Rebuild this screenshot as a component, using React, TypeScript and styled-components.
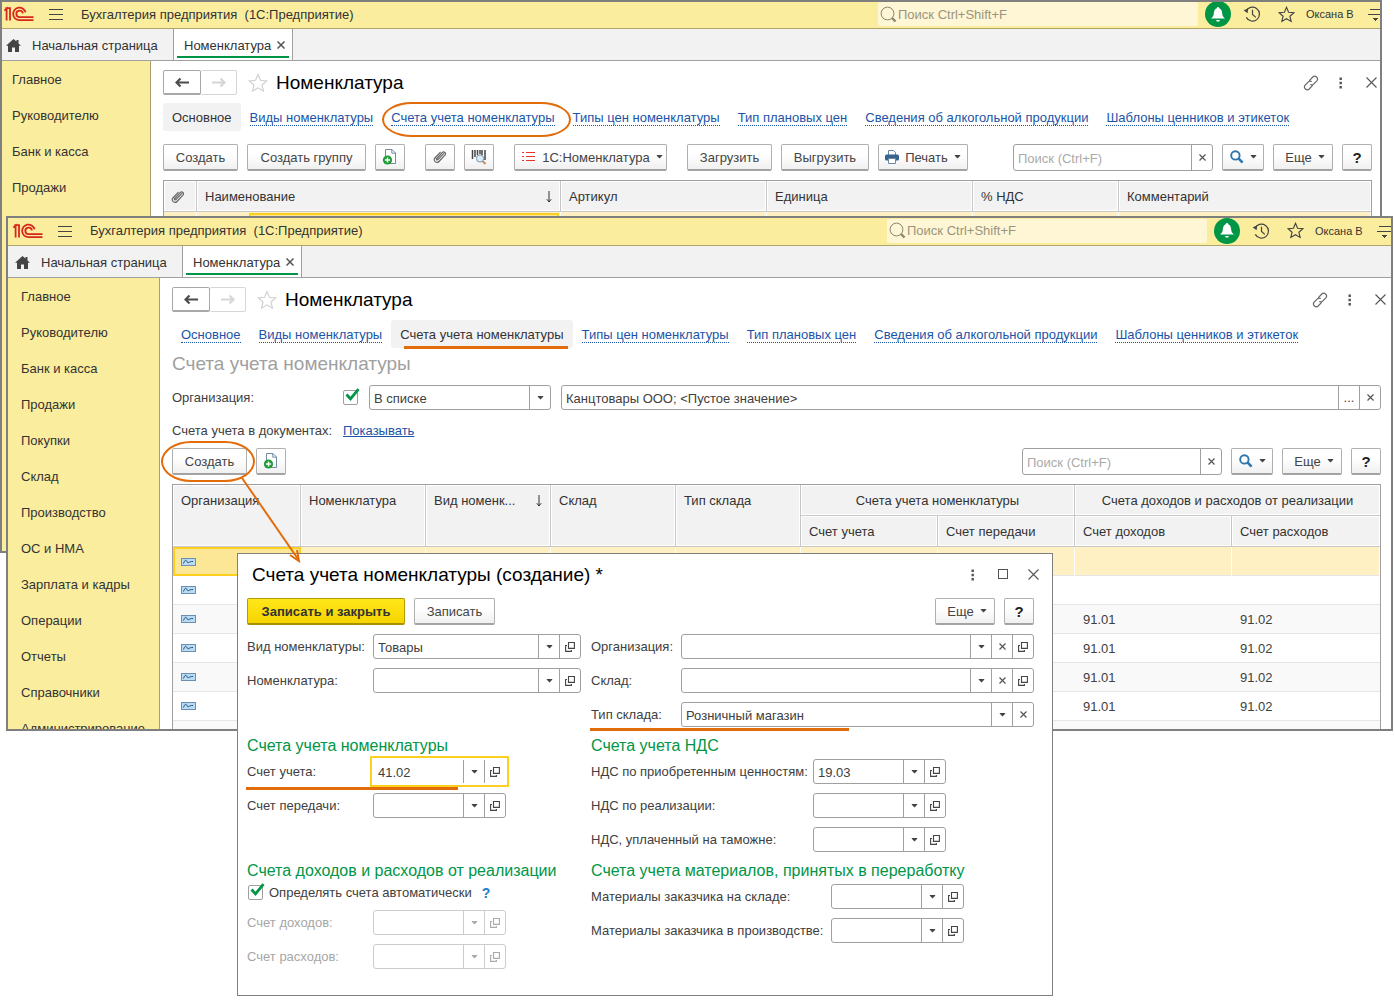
import React from "react";
import styled, { createGlobalStyle, css } from "styled-components";

const Global = createGlobalStyle`
  *, *::before, *::after { box-sizing: border-box; }
  body { margin: 0; background: #fff; }
  body, button, input, select {
    font-family: "Liberation Sans", Arial, sans-serif;
    font-size: 13px;
    color: #404040;
  }
  button, input, select { margin: 0; padding: 0; }
  h1, h2, h3, ul { margin: 0; padding: 0; font-weight: normal; list-style: none; }
`;

const c = {
  frame: "#7f7f7f",
  yellow: "#fbed9e",
  line: "#a0a0a0",
  grey: "#f2f2f2",
  link: "#1a54a8",
  green: "#009646",
  orange: "#e36c0a",
  accent: "#fccf21",
};

/* ---------- desktop and windows ---------- */

const Desktop = styled.main`
  position: relative;
  min-height: 1000px;
  min-width: 1240px;
`;

const Win = styled.section<{ $top: number; $left: number; $right: number; $height: number }>`
  position: absolute;
  top: ${(p) => p.$top}px;
  left: ${(p) => p.$left}px;
  right: ${(p) => p.$right}px;
  height: ${(p) => p.$height}px;
  display: flex;
  flex-direction: column;
  overflow: hidden;
  background: #fff;
  border: 2px solid ${c.frame};
`;

const Header = styled.header<{ $inset: number; $tall?: boolean }>`
  flex: none;
  display: flex;
  align-items: center;
  height: ${(p) => (p.$tall ? 28 : 27)}px;
  padding: 0 0 2px ${(p) => p.$inset + 2}px;
  background: ${c.yellow};
  border-bottom: 1px solid #b0a46a;
`;

const PlainButton = styled.button`
  flex: none;
  display: grid;
  place-items: center;
  border: 0;
  background: none;
  color: inherit;
`;

const MenuButton = styled(PlainButton)`
  width: 16px;
  height: 16px;
  margin: 0 17px 0 14px;
`;

const AppName = styled.div`
  flex: 1;
  white-space: pre;
  color: #333;
`;

const GlobalSearch = styled.label`
  display: flex;
  align-items: center;
  gap: 1px;
  width: 320px;
  height: 24px;
  padding-left: 2px;
  border-radius: 2px;
  background: #fff6d6;
  color: #8a8670;
  input {
    flex: 1;
    min-width: 0;
    border: 0;
    outline: 0;
    background: none;
  }
  input::placeholder { color: #9a957c; opacity: 1; }
`;

const HeaderTools = styled.div<{ $end: number }>`
  display: flex;
  align-items: center;
  height: 26px;
  padding-left: 7px;
  color: #444;
  margin-right: ${(p) => p.$end}px;
`;

const Bell = styled(PlainButton)`
  width: 26px;
  height: 26px;
  border-radius: 50%;
  background: ${c.green};
  margin-right: 12px;
`;

const HeaderIcon = styled(PlainButton)`
  width: 18px;
  height: 18px;
  margin-right: 16px;
`;

const User = styled.span`
  width: 49px;
  margin: 0 13px 0 -5px;
  font-size: 11px;
  color: #333;
  white-space: nowrap;
`;

const TabBar = styled.nav<{ $inset: number }>`
  flex: none;
  display: flex;
  height: 32px;
  padding-left: ${(p) => p.$inset}px;
  background: ${c.grey};
  border-bottom: 1px solid ${c.line};
  color: #333;
`;

const HomeTab = styled.button`
  display: flex;
  align-items: center;
  gap: 11px;
  width: 171px;
  padding: 1px 0 0 4px;
  border: 0;
  background: none;
  color: #333;
`;

const ActiveTab = styled.div`
  display: flex;
  align-items: center;
  justify-content: space-between;
  width: 120px;
  padding: 1px 4px 0 10px;
  background:
    linear-gradient(${c.green}, ${c.green}) 3px 27px / calc(100% - 6px) 2px no-repeat,
    #fff;
  border: 1px solid ${c.line};
  border-width: 0 1px;
`;

const CloseTab = styled(PlainButton)`
  width: 14px;
  height: 14px;
`;

const Body = styled.div`
  flex: 1;
  min-height: 0;
  display: flex;
`;

const Sidebar = styled.ul<{ $inset: number }>`
  flex: none;
  width: ${(p) => p.$inset + 149}px;
  overflow: hidden;
  padding: 1px 0 0 ${(p) => p.$inset + 10}px;
  background: ${c.yellow};
  border-right: 1px solid #a89f6c;
  a {
    display: block;
    line-height: 36px;
    color: #333;
    text-decoration: none;
    white-space: nowrap;
  }
`;

const Content = styled.div<{ $end: number }>`
  flex: 1;
  min-width: 0;
  padding: 9px ${(p) => p.$end}px 0 12px;
`;

/* ---------- page heading ---------- */

const PageHead = styled.div`
  display: flex;
  align-items: center;
  height: 25px;
  margin-bottom: 8px;
`;

const NavPair = styled.div`
  display: flex;
  width: 74px;
  height: 25px;
  margin-right: 11px;
`;

const NavButton = styled(PlainButton)<{ $off?: boolean }>`
  width: 38px;
  height: 25px;
  background: #fff;
  border: 1px solid ${(p) => (p.$off ? "#d6d6d6" : "#a8a8a8")};
  border-bottom-width: ${(p) => (p.$off ? 1 : 2)}px;
  border-radius: 2px;
  color: ${(p) => (p.$off ? "#d6d6d6" : "#4d4d4d")};
  & + & { width: 36px; border-left: 0; }
`;

const Title = styled.h1`
  flex: 1;
  margin-left: 8px;
  font-size: 19px;
  line-height: 24px;
  color: #000;
`;

const HeadIcons = styled.div`
  display: flex;
  align-items: center;
  gap: 14px;
  color: #666;
  margin-right: -7px;
`;

const HeadIcon = styled(PlainButton)`
  width: 16px;
  height: 16px;
`;

const Links = styled.nav`
  display: flex;
  height: 28px;
  white-space: nowrap;
`;

const SectionLink = styled.a<{ $current?: boolean }>`
  display: flex;
  align-items: center;
  padding: 2px 9px 0;
  border-radius: 3px;
  text-decoration: none;
  color: ${(p) => (p.$current ? "#333" : c.link)};
  background: ${(p) => (p.$current ? c.grey : "none")};
  span {
    line-height: 15px;
    border-bottom: 1px dotted ${(p) => (p.$current ? "transparent" : c.link)};
  }
`;

/* ---------- buttons and fields ---------- */

const Toolbar = styled.div<{ $gap?: number }>`
  display: flex;
  align-items: flex-start;
  gap: 9px;
  height: 27px;
  margin: ${(p) => p.$gap ?? 9}px 0 9px;
`;

const Space = styled.span<{ $w?: number }>`
  ${(p) => (p.$w ? css`width: ${p.$w}px;` : css`flex: 1;`)}
`;

const Button = styled.button<{ $w: number; $main?: boolean }>`
  flex: none;
  display: flex;
  align-items: center;
  justify-content: center;
  gap: 6px;
  width: ${(p) => p.$w}px;
  height: 27px;
  border: 1px solid ${(p) => (p.$main ? "#b59a00" : "#b0b0b0")};
  border-bottom: 2px solid ${(p) => (p.$main ? "#a89000" : "#a3a3a3")};
  border-radius: 2px;
  background: ${(p) => (p.$main ? "linear-gradient(#ffe71a, #f6d400)" : "linear-gradient(#fff 40%, #f0f0f0)")};
  font-weight: ${(p) => (p.$main ? "bold" : "normal")};
  color: ${(p) => (p.$main ? "#333" : "#444")};
  white-space: nowrap;
`;

const MenuDropButton = styled(Button)`
  padding-left: 4px;
`;

const HelpButton = styled(Button)`
  font-size: 15px;
  font-weight: bold;
  color: #222;
`;

const FieldBox = styled.div<{ $w?: number; $h?: number; $focus?: boolean; $off?: boolean }>`
  display: flex;
  ${(p) => (p.$w ? css`flex: none; width: ${p.$w}px;` : css`flex: 1; min-width: 0;`)}
  height: ${(p) => p.$h ?? 25}px;
  border: 1px solid ${(p) => (p.$off ? "#ccc" : c.line)};
  border-radius: 3px;
  background: #fff;
  color: ${(p) => (p.$off ? "#aaa" : "#444")};
  ${(p) =>
    p.$focus &&
    css`
      border-color: transparent;
      border-radius: 0;
      outline: 2px solid ${c.accent};
      outline-offset: 1px;
    `}
  input, select {
    flex: 1;
    min-width: 0;
    padding: 1px 4px 0;
    border: 0;
    outline: 0;
    background: none;
    appearance: none;
  }
  input::placeholder { color: #aaa; opacity: 1; }
`;

const FieldButton = styled(PlainButton)<{ $off?: boolean }>`
  width: 21px;
  border-left: 1px solid ${(p) => (p.$off ? "#ccc" : c.line)};
`;

const Tick = styled.span`
  position: relative;
  flex: none;
  width: 16px;
  height: 16px;
  input {
    display: block;
    width: 15px;
    height: 15px;
    appearance: none;
    border: 1px solid ${c.line};
    border-radius: 2px;
    background: #fff;
  }
  svg {
    position: absolute;
    left: 2px;
    top: -2px;
    pointer-events: none;
  }
`;

/* ---------- tables ---------- */

const Grid = styled.table`
  width: 100%;
  table-layout: fixed;
  border-collapse: separate;
  border-spacing: 0;
  border: 1px solid ${c.line};
  th {
    height: 31px;
    padding: 1px 8px 0;
    font-weight: normal;
    text-align: left;
    vertical-align: top;
    line-height: 29px;
    background: ${c.grey};
    box-shadow: inset 0 0 0 1px #fff;
    border: 1px solid #c8c8c8;
    border-width: 0 1px 1px 0;
    white-space: nowrap;
    color: #333;
  }
  thead tr:first-child th:last-child, thead tr + tr th:last-child { border-right: 0; }
  th svg, td svg { display: block; }
  td { height: 29px; padding: 0 8px; line-height: 15px; border-bottom: 1px solid #e6e6e6; }
  tbody tr:nth-child(odd) td { background: #f9f9f9; }
  tbody tr:first-child td { background: #fef0c3; border-right: 1px solid #fff; }
`;

const Centered = styled.span`
  display: block;
  text-align: center;
`;

const Sorted = styled.span`
  display: flex;
  align-items: center;
  justify-content: space-between;
`;

const ClipHead = styled.span`
  display: grid;
  place-items: center;
  height: 29px;
  margin: 0 -4px 0 -8px;
`;

const CurrentCell = styled.td`
  && {
    padding: 0 6px;
    background: #fce796 !important;
    border: 2px solid ${c.accent} !important;
  }
`;

const GroupCell = styled.td`
  && { padding: 1px 1px 0 52px; }
  div { height: 28px; border: 2px solid ${c.accent}; background: #fce796; }
`;

/* ---------- filter block ---------- */

const PageSubtitle = styled.h2`
  margin: 4px 0 9px;
  font-size: 19px;
  line-height: 24px;
  color: #a0a0a0;
`;

const FilterRow = styled.div<{ $low?: boolean }>`
  display: flex;
  align-items: center;
  gap: 10px;
  height: ${(p) => (p.$low ? 18 : 25)}px;
  margin-bottom: ${(p) => (p.$low ? 9 : 11)}px;
  > :first-child { width: 161px; white-space: nowrap; }
  a { color: ${c.link}; }
`;

/* ---------- dialog ---------- */

const Dialog = styled.section`
  position: absolute;
  left: 237px;
  top: 553px;
  width: 816px;
  height: 443px;
  padding: 0 18px 0 9px;
  background: #fff;
  border: 1px solid ${c.frame};
`;

const DialogHead = styled.div`
  display: flex;
  align-items: center;
  height: 41px;
  margin-bottom: 3px;
  padding-left: 5px;
  h1 { margin-left: 0; }
`;

const Columns = styled.div`
  display: grid;
  grid-template-columns: 334px 1fr;
  column-gap: 10px;
`;

const Fields = styled.div`
  display: flex;
  flex-direction: column;
  gap: 9px;
`;

const FormRow = styled.div<{ $label: number; $off?: boolean }>`
  display: flex;
  align-items: center;
  height: 25px;
  > label {
    flex: none;
    width: ${(p) => p.$label}px;
    white-space: nowrap;
    color: ${(p) => (p.$off ? "#a6a6a6" : "#404040")};
  }
`;

const GroupTitle = styled.h3`
  margin: 9px 0 3px;
  font-size: 16px;
  line-height: 20px;
  color: ${c.green};
  white-space: nowrap;
`;

const TickRow = styled.div`
  display: flex;
  align-items: center;
  gap: 5px;
  height: 17px;
  padding-left: 1px;
  b { margin-left: 5px; font-size: 14px; color: #1d7fc0; }
`;

/* ---------- tutorial marks over the windows ---------- */

const Oval = styled.div<{ $x: number; $y: number; $w: number; $h: number }>`
  position: absolute;
  left: ${(p) => p.$x}px;
  top: ${(p) => p.$y}px;
  width: ${(p) => p.$w}px;
  height: ${(p) => p.$h}px;
  border: 2px solid ${c.orange};
  border-radius: 30px / 50%;
  pointer-events: none;
`;

const Underline = styled.div<{ $x: number; $y: number; $w: number }>`
  position: absolute;
  left: ${(p) => p.$x}px;
  top: ${(p) => p.$y}px;
  width: ${(p) => p.$w}px;
  height: 3px;
  background: ${c.orange};
  pointer-events: none;
`;

const Arrow = styled.svg`
  position: absolute;
  left: 236px;
  top: 474px;
  pointer-events: none;
`;

/* ---------- drawings ---------- */

const Logo = () => (
  <svg width="30" height="16" viewBox="0 0 30 16" fill="none" stroke="#d9261c" strokeWidth="1.8">
    <path d="M0.4 4.6 L2.6 2.6 V14.6 M1.4 2.2 H6 V14.6" />
    <path d="M21.6 6.4 A6.3 6.3 0 1 0 15.6 14.2 H29.5" />
    <path d="M18.9 7.4 A3.3 3.3 0 1 0 15.6 11.2 H29.5" />
  </svg>
);
const Burger = () => (
  <svg width="16" height="14" viewBox="0 0 16 14" stroke="#444" shapeRendering="crispEdges">
    <path d="M1 2.5H15M1 7.5H15M1 12.5H15" />
  </svg>
);
const Magnifier = () => (
  <svg width="17" height="17" viewBox="0 0 17 17" fill="none" stroke="#8a8670">
    <circle cx="7.5" cy="7.5" r="6.4" />
    <path d="M12 12 L15.5 15.5" strokeWidth="2.4" />
  </svg>
);
const BellIcon = () => (
  <svg width="16" height="17" viewBox="0 0 16 17" fill="#fff">
    <path d="M8 1 C8.8 1 9.2 1.6 9.2 2.3 C11.4 3 12 5 12.2 7.5 C12.4 10 13.4 11.2 15 12.6 H1 C2.6 11.2 3.6 10 3.8 7.5 C4 5 4.6 3 6.8 2.3 C6.8 1.6 7.2 1 8 1Z M6 14 H10 Q9.6 15.8 8 15.8 Q6.4 15.8 6 14Z" />
  </svg>
);
const History = () => (
  <svg width="18" height="18" viewBox="0 0 18 18" fill="none" stroke="#444" strokeWidth="1.2">
    <path d="M3 6.4 A7 7 0 1 1 3.3 12.4" />
    <path d="M9.5 4.8 V9.4 L12.8 12.4" />
    <path d="M0.6 5.2 L5.2 3.6 L4.6 8.2Z" fill="#444" stroke="none" />
  </svg>
);
const Star = ({ size = 17, color = "#444", w = 1.2 }: { size?: number; color?: string; w?: number }) => (
  <svg width={size} height={size} viewBox="0 0 18 18" fill="none" stroke={color} strokeWidth={w}>
    <path d="M9 1.4 L11.2 6.6 L16.8 7.1 L12.6 10.8 L13.9 16.3 L9 13.4 L4.1 16.3 L5.4 10.8 L1.2 7.1 L6.8 6.6Z" />
  </svg>
);
const ViewMenu = () => (
  <svg width="14" height="16" viewBox="0 0 14 16" stroke="#444" shapeRendering="crispEdges">
    <path d="M2 3.5H14M0 8.5H14" />
    <path d="M4.5 12H10.5L7.5 15Z" fill="#444" stroke="none" />
  </svg>
);
const Home = () => (
  <svg width="15" height="13" viewBox="0 0 15 13" fill="#444">
    <path d="M7.5 0 L10.5 2.6 V1 H12.5 V4.4 L15 6.8 H13 V13 H9 V8.5 H6 V13 H2 V6.8 H0Z" />
  </svg>
);
const Cross = ({ s = 8, w = 1.2, color = "#555" }: { s?: number; w?: number; color?: string }) => (
  <svg width={s} height={s} viewBox={`0 0 ${s} ${s}`} stroke={color} strokeWidth={w}>
    <path d={`M0.5 0.5L${s - 0.5} ${s - 0.5}M${s - 0.5} 0.5L0.5 ${s - 0.5}`} />
  </svg>
);
const ArrowIcon = ({ right = false }: { right?: boolean }) => (
  <svg width="14" height="11" viewBox="0 0 14 11" fill="none" stroke="currentColor" strokeWidth="2.2">
    <path d={right ? "M0 5.5H12M8.5 1.5L12.5 5.5L8.5 9.5" : "M14 5.5H2M5.5 1.5L1.5 5.5L5.5 9.5"} />
  </svg>
);
const LinkIcon = () => (
  <svg width="16" height="16" viewBox="0 0 16 16" fill="none" stroke="#666" strokeWidth="1.2" strokeLinecap="round">
    <path d="M6.6 5.4 L9.8 2 C12.2 -0.4 16 3.2 13.9 5.8 L10.6 9.2 C9.8 10 8.6 10 7.8 9.6" />
    <path d="M9.4 10.6 L6.2 14 C3.8 16.4 0 12.8 2.1 10.2 L5.4 6.8 C6.2 6 7.4 6 8.2 6.4" />
  </svg>
);
const Dots = () => (
  <svg width="4" height="12" viewBox="0 0 4 12" fill="#555">
    <path d="M0.5 0.5h2.4v2.4h-2.4zM0.5 4.8h2.4v2.4h-2.4zM0.5 9h2.4v2.4h-2.4z" />
  </svg>
);
const Caret = () => (
  <svg width="7" height="4" viewBox="0 0 7 4" fill="currentColor">
    <path d="M0.8 0H6.2V0.8L3.5 3.4L0.8 0.8Z" />
  </svg>
);
const OpenIcon = () => (
  <svg width="10" height="10" viewBox="0 0 10 10" fill="none" stroke="currentColor" strokeWidth="1.1">
    <path d="M3.5 0.5H9.4V6.4H3.5ZM2 3.5H0.6V9.4H6.4V8" />
  </svg>
);
const Clip = () => (
  <svg width="14" height="14" viewBox="0 0 14 14" fill="none" stroke="#666" strokeWidth="1.2" strokeLinecap="round">
    <path d="M10.6 3.6 L4.9 9.6 C4 10.5 3 9.4 3.8 8.5 L9.2 2.6 C10.9 0.8 13.6 3.2 11.9 5.2 L6 11.5 C3.6 14 -0.4 10.6 1.9 8 L7.2 2.3" />
  </svg>
);
const NewDoc = () => (
  <svg width="16" height="18" viewBox="0 0 16 18" fill="none">
    <path d="M3.5 1.5H10L13.5 5V15.5H3.5Z" fill="#fff" stroke="#7389a3" />
    <path d="M9.8 1.5V5.2H13.5" stroke="#7389a3" />
    <circle cx="5.5" cy="12" r="4.6" fill="#1f9c35" />
    <path d="M5.5 9.4V14.6M2.9 12H8.1" stroke="#fff" strokeWidth="1.4" />
  </svg>
);
const Barcode = () => (
  <svg width="18" height="18" viewBox="0 0 18 18" fill="none">
    <path d="M2.5 2V11M5 2V9M7.5 2V7M10 2V6M12 2V7M15 2V12" stroke="#444" strokeWidth="1.5" />
    <circle cx="10" cy="10.5" r="3.6" fill="#d8ecfa" stroke="#7d93a8" />
    <path d="M12.8 13.2L15.5 16" stroke="#c98a5a" strokeWidth="2" />
  </svg>
);
const RedList = () => (
  <svg width="14" height="12" viewBox="0 0 14 12" stroke="#e8352c" shapeRendering="crispEdges">
    <path d="M0 1.5H2M4 1.5H13M0 5.5H2M4 5.5H13M0 9.5H2M4 9.5H13" />
  </svg>
);
const Printer = () => (
  <svg width="14" height="14" viewBox="0 0 14 14">
    <path d="M3.5 5V0.5H8.5L10.5 2.5V5" fill="#fff" stroke="#6a87a3" />
    <rect x="0" y="4.5" width="14" height="6" rx="1.5" fill="#35648f" />
    <path d="M3.5 8.5H10.5V13.5H3.5Z" fill="#fff" stroke="#6a87a3" />
  </svg>
);
const BlueFind = () => (
  <svg width="14" height="14" viewBox="0 0 14 14" fill="none" stroke="#2b76ae">
    <circle cx="5.4" cy="5.4" r="4.2" strokeWidth="1.9" />
    <path d="M8.4 8.4L12.6 12.6" strokeWidth="2.6" />
  </svg>
);
const SortArrow = () => (
  <svg width="6" height="12" viewBox="0 0 6 12" fill="none" stroke="#333">
    <path d="M3 0V11M0.8 8.2L3 11L5.2 8.2" />
  </svg>
);
const RecordIcon = () => (
  <svg width="15" height="8" viewBox="0 0 15 8">
    <rect x="0.5" y="0.5" width="14" height="7" fill="#b9dbf3" stroke="#6b8fb3" />
    <path d="M2.5 5.5C4 1.5 5 1.5 6.2 4C7.2 6 8.2 3.2 12 3.5" fill="none" stroke="#234f7d" />
  </svg>
);
const Check = () => (
  <svg width="15" height="15" viewBox="0 0 15 15" fill="none" stroke={c.green} strokeWidth="2.8">
    <path d="M1.5 6.5L5.5 10.8L13.5 1.2" />
  </svg>
);
const Square = () => (
  <svg width="11" height="11" viewBox="0 0 11 11" fill="none" stroke="#555" shapeRendering="crispEdges">
    <rect x="0.5" y="0.5" width="9" height="9" />
  </svg>
);

/* ---------- shared parts ---------- */

const sections = [
  "Главное", "Руководителю", "Банк и касса", "Продажи", "Покупки", "Склад", "Производство",
  "ОС и НМА", "Зарплата и кадры", "Операции", "Отчеты", "Справочники", "Администрирование",
];

const pages = [
  "Основное", "Виды номенклатуры", "Счета учета номенклатуры", "Типы цен номенклатуры",
  "Тип плановых цен", "Сведения об алкогольной продукции", "Шаблоны ценников и этикеток",
];

type FrameProps = {
  top: number; left: number; right: number; height: number;
  inset: number; end: number; current: number; count: number; tall?: boolean;
  children: React.ReactNode;
};

function AppWindow({ top, left, right, height, inset, end, current, count, tall, children }: FrameProps) {
  return (
    <Win $top={top} $left={left} $right={right} $height={height}>
      <Header $inset={inset} $tall={tall}>
        <Logo />
        <MenuButton aria-label="Меню"><Burger /></MenuButton>
        <AppName>Бухгалтерия предприятия  (1С:Предприятие)</AppName>
        <GlobalSearch>
          <Magnifier />
          <input aria-label="Поиск по программе" placeholder="Поиск Ctrl+Shift+F" />
        </GlobalSearch>
        <HeaderTools $end={end - 10}>
          <Bell aria-label="Уведомления"><BellIcon /></Bell>
          <HeaderIcon aria-label="История"><History /></HeaderIcon>
          <HeaderIcon aria-label="Избранное"><Star /></HeaderIcon>
          <User>Оксана В</User>
          <PlainButton aria-label="Вид"><ViewMenu /></PlainButton>
        </HeaderTools>
      </Header>
      <TabBar $inset={inset}>
        <HomeTab><Home />Начальная страница</HomeTab>
        <ActiveTab>
          Номенклатура
          <CloseTab aria-label="Закрыть вкладку"><Cross s={8} w={1.5} /></CloseTab>
        </ActiveTab>
      </TabBar>
      <Body>
        <Sidebar $inset={inset}>
          {sections.slice(0, count).map((s) => <li key={s}><a href="#">{s}</a></li>)}
        </Sidebar>
        <Content $end={end}>
          <PageHead>
            <NavPair>
              <NavButton aria-label="Назад"><ArrowIcon /></NavButton>
              <NavButton aria-label="Вперед" $off><ArrowIcon right /></NavButton>
            </NavPair>
            <Star size={20} color="#cfcfcf" w={1} />
            <Title>Номенклатура</Title>
            <HeadIcons>
              <HeadIcon aria-label="Ссылка"><LinkIcon /></HeadIcon>
              <HeadIcon aria-label="Еще действия"><Dots /></HeadIcon>
              <HeadIcon aria-label="Закрыть"><Cross s={11} w={1.1} /></HeadIcon>
            </HeadIcons>
          </PageHead>
          <Links>
            {pages.map((p, i) => (
              <SectionLink key={p} href="#" $current={i === current}><span>{p}</span></SectionLink>
            ))}
          </Links>
          {children}
        </Content>
      </Body>
    </Win>
  );
}

const ListSearch = () => (
  <>
    <FieldBox $w={200} $h={27}>
      <input aria-label="Поиск в списке" placeholder="Поиск (Ctrl+F)" />
      <FieldButton aria-label="Очистить"><Cross s={7} /></FieldButton>
    </FieldBox>
    <Button $w={42} aria-label="Найти"><BlueFind /><Caret /></Button>
    <MenuDropButton $w={60}>Еще <Caret /></MenuDropButton>
    <HelpButton $w={30}>?</HelpButton>
  </>
);

type Btn = "pick" | "clear" | "open";

function Field({ id, label, value = "", buttons = ["pick", "open"], labelWidth, w, focus, off }: {
  id: string; label: string; value?: string; buttons?: Btn[]; labelWidth: number; w?: number; focus?: boolean; off?: boolean;
}) {
  return (
    <FormRow $label={labelWidth} $off={off}>
      <label htmlFor={id}>{label}</label>
      <FieldBox $w={w} $focus={focus} $off={off}>
        <input id={id} defaultValue={value} disabled={off} />
        {buttons.map((b) => (
          <FieldButton key={b} $off={off} disabled={off} aria-label={b === "pick" ? "Выбрать" : b === "clear" ? "Очистить" : "Открыть"}>
            {b === "pick" ? <Caret /> : b === "clear" ? <Cross s={7} /> : <OpenIcon />}
          </FieldButton>
        ))}
      </FieldBox>
    </FormRow>
  );
}

const rows = [
  ["", ""], ["", ""], ["91.01", "91.02"], ["91.01", "91.02"], ["91.01", "91.02"], ["91.01", "91.02"], ["", ""],
];

export default function App() {
  return (
    <Desktop>
      <Global />

      <AppWindow top={0} left={0} right={13} height={553} inset={0} end={8} current={0} count={4}>
        <Toolbar $gap={13}>
          <Button $w={75}>Создать</Button>
          <Button $w={119}>Создать группу</Button>
          <Button $w={30} aria-label="Создать копированием"><NewDoc /></Button>
          <Space $w={2} />
          <Button $w={30} aria-label="Файлы"><Clip /></Button>
          <Button $w={30} aria-label="Поиск по штрихкоду"><Barcode /></Button>
          <Space $w={2} />
          <MenuDropButton $w={153}><RedList />1С:Номенклатура <Caret /></MenuDropButton>
          <Space $w={2} />
          <Button $w={85}>Загрузить</Button>
          <Button $w={88}>Выгрузить</Button>
          <Button $w={90}><Printer />Печать <Caret /></Button>
          <Space />
          <ListSearch />
        </Toolbar>
        <Grid>
          <colgroup>
            <col width="33" /><col /><col width="206" /><col width="206" /><col width="146" /><col width="252" />
          </colgroup>
          <thead>
            <tr>
              <th><ClipHead><Clip /></ClipHead></th>
              <th><Sorted>Наименование <SortArrow /></Sorted></th>
              <th>Артикул</th>
              <th>Единица</th>
              <th>% НДС</th>
              <th>Комментарий</th>
            </tr>
          </thead>
          <tbody>
            <tr>
              <td /><GroupCell><div /></GroupCell><td /><td /><td /><td />
            </tr>
          </tbody>
        </Grid>
      </AppWindow>

      <AppWindow top={216} left={6} right={2} height={515} inset={3} end={10} current={2} count={13} tall>
        <PageSubtitle>Счета учета номенклатуры</PageSubtitle>
        <FilterRow>
          <label htmlFor="useOrg">Организация:</label>
          <Tick><input id="useOrg" type="checkbox" defaultChecked /><Check /></Tick>
          <FieldBox $w={182}>
            <select aria-label="Вид сравнения"><option>В списке</option></select>
            <FieldButton aria-label="Выбрать вид сравнения"><Caret /></FieldButton>
          </FieldBox>
          <FieldBox>
            <input aria-label="Организации" defaultValue="Канцтовары ООО; <Пустое значение>" />
            <FieldButton aria-label="Подобрать">...</FieldButton>
            <FieldButton aria-label="Очистить"><Cross s={7} /></FieldButton>
          </FieldBox>
        </FilterRow>
        <FilterRow $low>
          <span>Счета учета в документах:</span>
          <a href="#">Показывать</a>
        </FilterRow>
        <Toolbar>
          <Button $w={75}>Создать</Button>
          <Button $w={30} aria-label="Создать копированием"><NewDoc /></Button>
          <Space />
          <ListSearch />
        </Toolbar>
        <Grid>
          <colgroup>
            <col width="128" /><col width="125" /><col width="125" /><col width="125" /><col width="125" />
            <col width="137" /><col width="137" /><col width="157" /><col />
          </colgroup>
          <thead>
            <tr>
              <th rowSpan={2}>Организация</th>
              <th rowSpan={2}>Номенклатура</th>
              <th rowSpan={2}><Sorted>Вид номенк... <SortArrow /></Sorted></th>
              <th rowSpan={2}>Склад</th>
              <th rowSpan={2}>Тип склада</th>
              <th colSpan={2}><Centered>Счета учета номенклатуры</Centered></th>
              <th colSpan={2}><Centered>Счета доходов и расходов от реализации</Centered></th>
            </tr>
            <tr>
              <th>Счет учета</th>
              <th>Счет передачи</th>
              <th>Счет доходов</th>
              <th>Счет расходов</th>
            </tr>
          </thead>
          <tbody>
            {rows.map(([income, cost], i) => (
              <tr key={i}>
                {i === 0 ? <CurrentCell><RecordIcon /></CurrentCell> : <td><RecordIcon /></td>}
                <td /><td /><td /><td /><td /><td />
                <td>{income}</td>
                <td>{cost}</td>
              </tr>
            ))}
          </tbody>
        </Grid>
      </AppWindow>

      <Dialog role="dialog" aria-labelledby="dialogTitle">
        <DialogHead>
          <Title id="dialogTitle">Счета учета номенклатуры (создание) *</Title>
          <HeadIcons>
            <HeadIcon aria-label="Еще действия"><Dots /></HeadIcon>
            <HeadIcon aria-label="Развернуть"><Square /></HeadIcon>
            <HeadIcon aria-label="Закрыть"><Cross s={11} w={1.1} /></HeadIcon>
          </HeadIcons>
        </DialogHead>
        <Toolbar $gap={0}>
          <Button $w={158} $main>Записать и закрыть</Button>
          <Button $w={81}>Записать</Button>
          <Space />
          <MenuDropButton $w={60}>Еще <Caret /></MenuDropButton>
          <HelpButton $w={30}>?</HelpButton>
        </Toolbar>
        <Columns>
          <Fields>
            <Field id="kind" label="Вид номенклатуры:" value="Товары" labelWidth={126} w={208} />
            <Field id="item" label="Номенклатура:" labelWidth={126} w={208} />
          </Fields>
          <Fields>
            <Field id="org" label="Организация:" labelWidth={90} buttons={["pick", "clear", "open"]} />
            <Field id="store" label="Склад:" labelWidth={90} buttons={["pick", "clear", "open"]} />
            <Field id="storeType" label="Тип склада:" value="Розничный магазин" labelWidth={90} buttons={["pick", "clear"]} />
          </Fields>
          <GroupTitle>Счета учета номенклатуры</GroupTitle>
          <GroupTitle>Счета учета НДС</GroupTitle>
          <Fields>
            <Field id="acc" label="Счет учета:" value="41.02" labelWidth={126} w={133} focus />
            <Field id="accOut" label="Счет передачи:" labelWidth={126} w={133} />
          </Fields>
          <Fields>
            <Field id="vatIn" label="НДС по приобретенным ценностям:" value="19.03" labelWidth={222} w={133} />
            <Field id="vatOut" label="НДС по реализации:" labelWidth={222} w={133} />
            <Field id="vatCustoms" label="НДС, уплаченный на таможне:" labelWidth={222} w={133} />
          </Fields>
          <GroupTitle>Счета доходов и расходов от реализации</GroupTitle>
          <GroupTitle>Счета учета материалов, принятых в переработку</GroupTitle>
          <Fields>
            <TickRow>
              <Tick><input id="auto" type="checkbox" defaultChecked /><Check /></Tick>
              <label htmlFor="auto">Определять счета автоматически</label>
              <b>?</b>
            </TickRow>
            <Field id="income" label="Счет доходов:" labelWidth={126} w={133} off />
            <Field id="cost" label="Счет расходов:" labelWidth={126} w={133} off />
          </Fields>
          <Fields>
            <Field id="matStore" label="Материалы заказчика на складе:" labelWidth={240} w={133} />
            <Field id="matProd" label="Материалы заказчика в производстве:" labelWidth={240} w={133} />
          </Fields>
        </Columns>
      </Dialog>

      <Oval $x={382} $y={102} $w={189} $h={35} />
      <Oval $x={161} $y={441} $w={94} $h={41} />
      <Underline $x={404} $y={346} $w={164} />
      <Underline $x={590} $y={728} $w={259} />
      <Underline $x={246} $y={787} $w={212} />
      <Arrow width="68" height="92" viewBox="0 0 68 92" fill="none" stroke={c.orange} strokeWidth="2">
        <path d="M6 4L62 85" />
        <path d="M54 81L63 87L61 76" />
      </Arrow>
    </Desktop>
  );
}
